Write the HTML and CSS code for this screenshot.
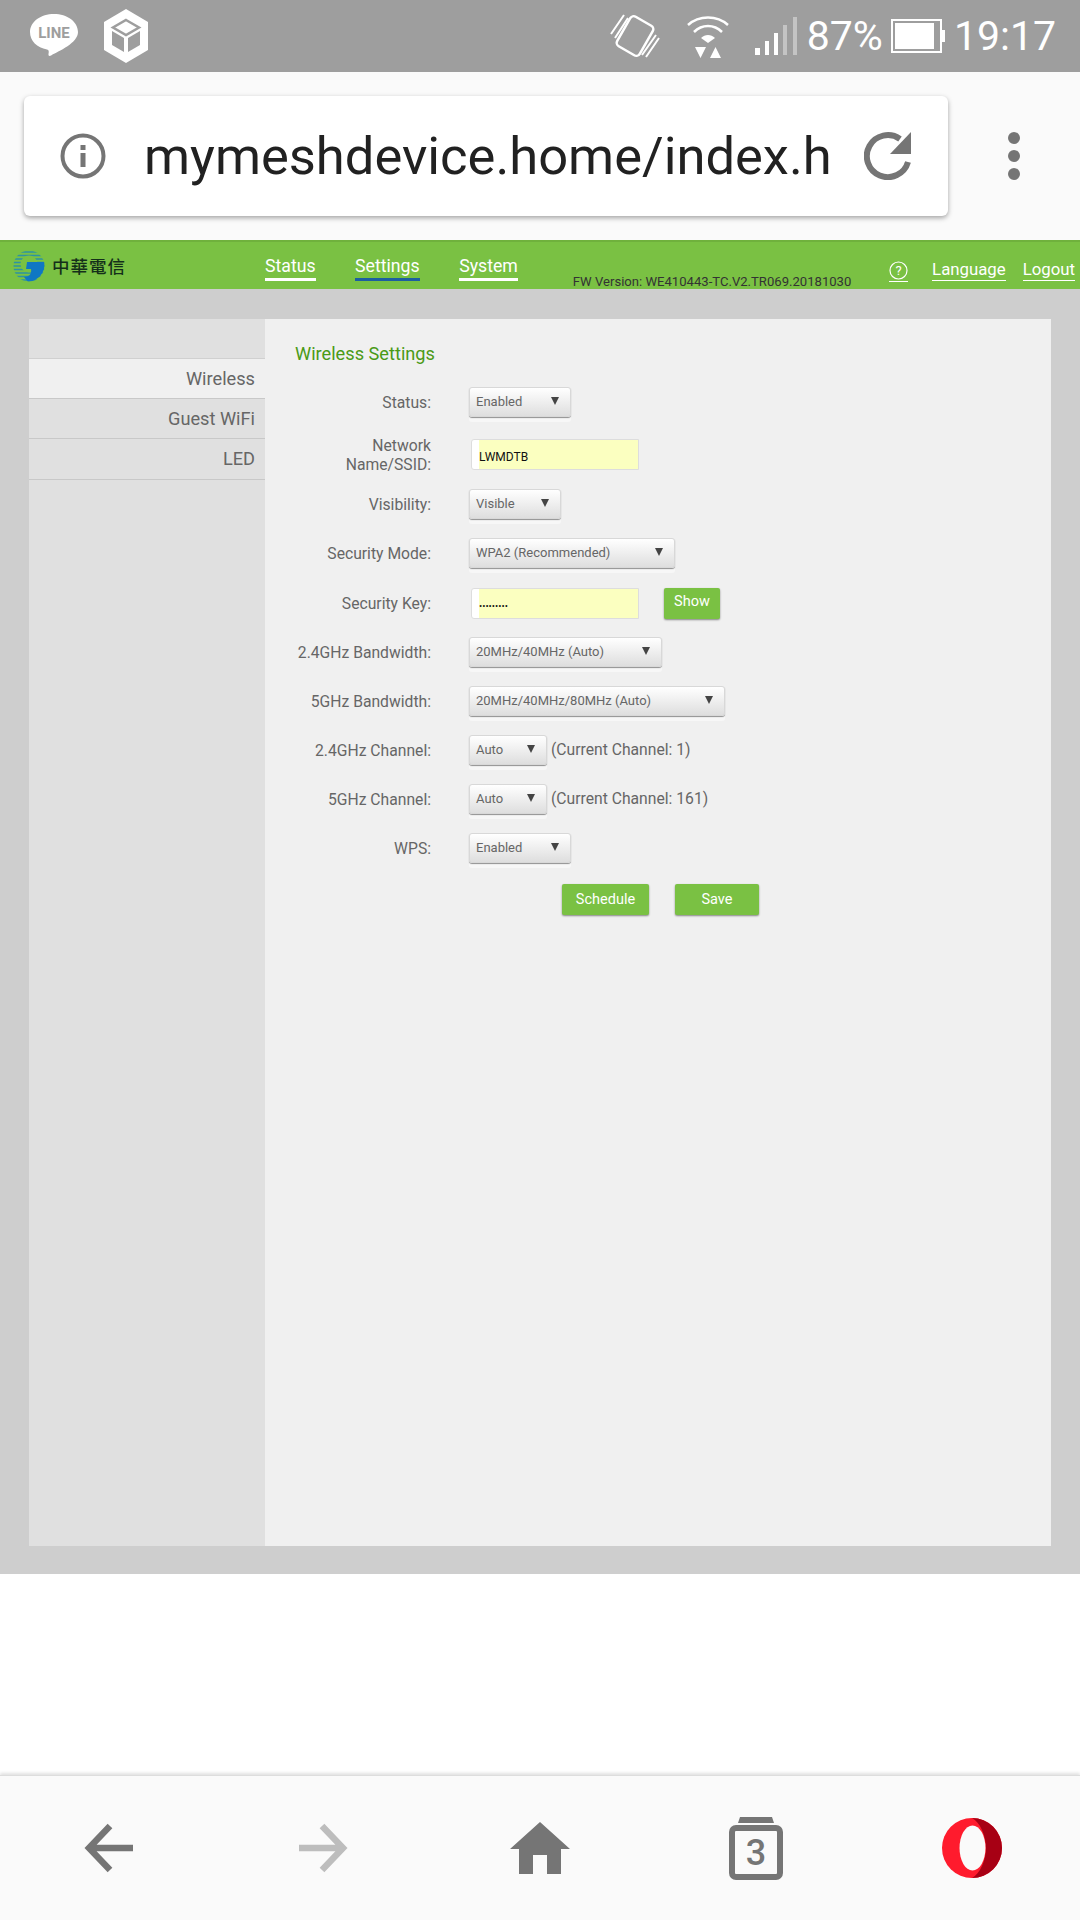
FILE: index.html
```html
<!DOCTYPE html>
<html lang="en">
<head>
  <meta charset="UTF-8" />
  <title>Wireless Settings</title>
  <link rel="stylesheet" href="styles.css">
</head>
<body>
  <div class="phone">
    <div class="statusbar">
      <div class="status-left">
        <svg class="icon-line" width="48" height="48" viewBox="0 0 48 48">
          <path d="M24 2C11 2 0 9.500 0 20c0 9 7 15.500 17 17.500 2 .5 2 2 1.500 4.500-.3 2 1 2.500 3 1.200C29 39 48 31 48 20 48 9.500 37 2 24 2z" fill="#fff"/>
          <text x="24" y="26" text-anchor="middle" class="line-text">LINE</text>
        </svg>
        <svg class="icon-box" width="44" height="54" viewBox="0 0 44 54">
          <path d="M22 0l22 13v28L22 54 0 41V13z" fill="#fff"/>
          <path d="M22 11l13 7.500-13 7.500-13-7.500z" fill="none" stroke="#9e9e9e" stroke-width="2.500"/>
          <path d="M8 22l12 7v14l-12-7z" fill="#9e9e9e"/>
          <path d="M36 22l-12 7v14l12-7z" fill="#9e9e9e"/>
        </svg>
      </div>
      <div class="status-right">
        <svg class="icon-vibrate" width="50" height="46" viewBox="0 0 50 46">
          <rect x="12" y="6" width="26" height="34" rx="4" transform="rotate(30 25 23)" fill="none" stroke="#fff" stroke-width="2.500"/>
          <path d="M1 21L14 2M5 25L18 5M32 42L46 22M36 44L49 25" stroke="#fff" stroke-width="2" fill="none"/>
        </svg>
        <svg class="icon-wifi" width="42" height="44" viewBox="0 0 42 44">
          <path d="M1 11C12 1 30 1 41 11" fill="none" stroke="#fff" stroke-width="2.500"/>
          <path d="M7 18C15 10 27 10 35 18" fill="none" stroke="#fff" stroke-width="2.500"/>
          <path d="M14 24C18 20 24 20 28 24L21 29z" fill="#fff"/>
          <path d="M8 33h11l-5.500 11zM23 44h11l-5.500-11z" fill="#fff"/>
        </svg>
        <svg class="icon-signal" width="42" height="38" viewBox="0 0 42 38">
          <rect x="0" y="31" width="5" height="7" fill="#fff"/>
          <rect x="10" y="24" width="4" height="14" fill="#fff"/>
          <rect x="19" y="16" width="4" height="22" fill="#fff"/>
          <rect x="28" y="8" width="4" height="30" fill="#c4c4c4"/>
          <rect x="38" y="0" width="4" height="38" fill="#c4c4c4"/>
        </svg>
        <span class="status-text battery-text">87%</span>
        <svg class="icon-battery" width="54" height="34" viewBox="0 0 54 34">
          <rect x="1" y="1" width="49" height="32" fill="none" stroke="#fff" stroke-width="2"/>
          <rect x="4" y="4" width="39" height="26" fill="#fff"/>
          <rect x="50" y="11" width="4" height="12" fill="#fff"/>
        </svg>
        <span class="status-text clock">19:17</span>
      </div>
    </div>

    <div class="toolbar">
      <div class="urlbox">
        <svg class="icon-info" width="46" height="46" viewBox="0 0 46 46">
          <circle cx="23" cy="23" r="20.500" fill="none" stroke="#757575" stroke-width="4"/>
          <rect x="20.500" y="12" width="5" height="5" fill="#757575"/>
          <rect x="20.500" y="20" width="5" height="14" fill="#757575"/>
        </svg>
        <div class="url">mymeshdevice.home/index.h</div>
        <svg class="icon-reload" width="48" height="48" viewBox="0 0 48 48">
          <path d="M44 30A21 21 0 1 1 36 7" fill="none" stroke="#757575" stroke-width="6"/>
          <path d="M47 0v22H26z" fill="#757575"/>
        </svg>
      </div>
      <div class="menu-dots"><i></i><i></i><i></i></div>
    </div>

    <div class="header">
      <svg class="logo" width="32" height="32" viewBox="0 0 32 32">
        <defs><clipPath id="logoClip"><circle cx="16" cy="16" r="15.500"/></clipPath></defs>
        <g clip-path="url(#logoClip)">
          <path d="M0 2h32M0 5.500h32M0 9h32M0 12.500h32M0 16h32M0 19.500h32M0 23h32M0 26.500h32M0 30h32" stroke="#2d93a3" stroke-width="1.700"/>
          <circle cx="16" cy="14" r="8.500" fill="#7ac143"/>
          <path d="M14 12H32C32 22 26 31 15 32L11 27C16 27 19 24 18 19H13z" fill="#0f77c4"/>
        </g>
      </svg>
      <span class="logo-text">中華電信</span>
      <nav class="mainnav">
        <a class="navlink">Status</a>
        <a class="navlink active">Settings</a>
        <a class="navlink">System</a>
      </nav>
      <span class="fw">FW Version: WE410443-TC.V2.TR069.20181030</span>
      <div class="header-right">
        <a class="toplink">
          <svg class="icon-help" width="19" height="19" viewBox="0 0 19 19">
            <circle cx="9.500" cy="9.500" r="8.500" fill="none" stroke="#fff" stroke-width="1.200"/>
            <text x="9.500" y="14" text-anchor="middle" class="help-text">?</text>
          </svg>
        </a>
        <a class="toplink">Language</a>
        <a class="toplink">Logout</a>
      </div>
    </div>

    <div class="page">
      <div class="panel">
        <div class="sidebar">
          <div class="side-item active">Wireless</div>
          <div class="side-item">Guest WiFi</div>
          <div class="side-item">LED</div>
        </div>
        <div class="main">
          <div class="title">Wireless Settings</div>

          <div class="row row-52">
            <label>Status:</label>
            <div class="select w-102">Enabled</div>
          </div>
          <div class="row row-50">
            <label class="label-double">Network Name/SSID:</label>
            <div class="textbox"><span>LWMDTB</span></div>
          </div>
          <div class="row">
            <label>Visibility:</label>
            <div class="select w-92">Visible</div>
          </div>
          <div class="row row-50">
            <label>Security Mode:</label>
            <div class="select w-206">WPA2 (Recommended)</div>
          </div>
          <div class="row">
            <label>Security Key:</label>
            <div class="control-line">
              <div class="textbox"><span class="dots">•••••••••</span></div>
              <button class="btn btn-show">Show</button>
            </div>
          </div>
          <div class="row">
            <label>2.4GHz Bandwidth:</label>
            <div class="select w-193">20MHz/40MHz (Auto)</div>
          </div>
          <div class="row">
            <label>5GHz Bandwidth:</label>
            <div class="select w-256">20MHz/40MHz/80MHz (Auto)</div>
          </div>
          <div class="row">
            <label>2.4GHz Channel:</label>
            <div class="control-line tight">
              <div class="select w-78">Auto</div>
              <span class="hint">(Current Channel: 1)</span>
            </div>
          </div>
          <div class="row">
            <label>5GHz Channel:</label>
            <div class="control-line tight">
              <div class="select w-78">Auto</div>
              <span class="hint">(Current Channel: 161)</span>
            </div>
          </div>
          <div class="row row-51">
            <label>WPS:</label>
            <div class="select w-102">Enabled</div>
          </div>
          <div class="actions">
            <button class="btn btn-schedule">Schedule</button>
            <button class="btn btn-save">Save</button>
          </div>
        </div>
      </div>
    </div>

    <div class="blank"></div>

    <div class="bottombar">
      <div class="bottom-item">
        <svg width="50" height="50" viewBox="0 0 50 50">
          <path d="M27 3L6 25l21 22M7 25h43" fill="none" stroke="#757575" stroke-width="6.500"/>
        </svg>
      </div>
      <div class="bottom-item">
        <svg width="50" height="50" viewBox="0 0 50 50">
          <path d="M23 3l21 22-21 22M43 25H0" fill="none" stroke="#bdbdbd" stroke-width="6.500"/>
        </svg>
      </div>
      <div class="bottom-item">
        <svg width="60" height="52" viewBox="0 0 60 52">
          <path d="M30 0l30 27H51v25H37V33H23v19H9V27H0z" fill="#757575"/>
        </svg>
      </div>
      <div class="bottom-item">
        <svg width="54" height="63" viewBox="0 0 54 63">
          <path d="M9 6l2-6h32l2 6z" fill="#757575"/>
          <rect x="3" y="11" width="48" height="49" rx="4" fill="none" stroke="#757575" stroke-width="6"/>
          <text x="27" y="48" text-anchor="middle" class="tab-count">3</text>
        </svg>
      </div>
      <div class="bottom-item">
        <svg width="60" height="60" viewBox="0 0 60 60">
          <ellipse cx="30" cy="30" rx="30" ry="30" fill="#ff1b2d"/>
          <path d="M30 0a30 30 0 0 1 0 60C38 56 44 42 44 30S38 4 30 0z" fill="#a70014"/>
          <ellipse cx="30.500" cy="30" rx="13" ry="22.500" fill="#fafafa"/>
        </svg>
      </div>
    </div>
  </div>
</body>
</html>
```

FILE: styles.css
```css
* {
  box-sizing: border-box;
}
body {
  margin: 0;
  font-family: Roboto, sans-serif;
  background: #fff;
}
.phone {
  width: 1080px;
  height: 1920px;
  display: flex;
  flex-direction: column;
  overflow: hidden;
}

/* status bar */
.statusbar {
  height: 72px;
  background: #9e9e9e;
  display: flex;
  justify-content: space-between;
  align-items: center;
  padding: 0 24px 0 30px;
  color: #fff;
}
.status-left {
  display: flex;
  align-items: center;
  gap: 26px;
}
.status-right {
  display: flex;
  align-items: center;
}
.line-text {
  font: bold 15px Roboto, sans-serif;
  fill: #9e9e9e;
}
.status-text {
  font-size: 41px;
  line-height: 72px;
}
.icon-vibrate {
  margin-right: 27px;
}
.icon-wifi {
  margin-right: 26px;
}
.icon-signal {
  margin-right: 10px;
}
.battery-text {
  margin-right: 8px;
}
.icon-battery {
  margin-right: 9px;
}

/* browser toolbar */
.toolbar {
  height: 168px;
  background: #fafafa;
  display: flex;
  align-items: center;
  padding: 0 0 0 24px;
}
.urlbox {
  width: 924px;
  height: 120px;
  background: #fff;
  border-radius: 6px;
  box-shadow: 0 2px 5px rgba(0,0,0,0.35);
  display: flex;
  align-items: center;
  padding: 0 36px 0 36px;
}
.url {
  flex: 1;
  margin-left: 38px;
  font-size: 52.500px;
  color: #212121;
  white-space: nowrap;
  overflow: hidden;
}
.menu-dots {
  margin-left: 60px;
  display: flex;
  flex-direction: column;
  gap: 6px;
}
.menu-dots i {
  display: block;
  width: 12px;
  height: 12px;
  border-radius: 50%;
  background: #757575;
}

/* router header */
.header {
  height: 49px;
  background: #7ac143;
  border-top: 2px solid #6fb13c;
  display: flex;
  align-items: center;
  padding-left: 13px;
}
.logo-text {
  margin-left: 7px;
  font-family: "Noto Sans CJK TC", sans-serif;
  font-size: 17.500px;
  font-weight: 500;
  color: #142f1a;
  letter-spacing: 1px;
}
.mainnav {
  display: flex;
  gap: 39.500px;
  margin-left: 139px;
}
.navlink {
  font-size: 17.700px;
  color: #fff;
  line-height: 24px;
  border-bottom: 3px solid #fff;
  margin-top: 3px;
}
.navlink.active {
  border-bottom-color: #1d5fa0;
}
.fw {
  margin-left: 55px;
  margin-top: 31px;
  font-size: 13.100px;
  color: #333;
  white-space: nowrap;
}
.header-right {
  margin-left: auto;
  display: flex;
  align-items: center;
  gap: 17px;
  padding-right: 5px;
  margin-top: 9px;
}
.toplink {
  font-size: 16.800px;
  color: #fff;
  line-height: 21px;
  border-bottom: 1px solid #fff;
  display: block;
}
.toplink:first-child {
  margin-right: 7px;
}
.icon-help {
  display: block;
  margin: 2px 0 1px;
}
.help-text {
  font: 13px Roboto, sans-serif;
  fill: #fff;
}

/* router page */
.page {
  height: 1285px;
  background: #cecece;
  padding: 30px 29px 28px;
}
.panel {
  height: 100%;
  display: flex;
  background: #f0f0f0;
}
.sidebar {
  width: 236px;
  background: #e0e0e0;
  padding-top: 39px;
}
.side-item {
  height: 40.500px;
  line-height: 40px;
  padding-right: 10px;
  text-align: right;
  font-size: 18.200px;
  color: #666;
  border-bottom: 1px solid #c8c8c8;
}
.side-item.active {
  background: #f0f0f0;
  border-top: 1px solid #d0d0d0;
}
.main {
  flex: 1;
  padding: 23px 0 0 30px;
}
.title {
  font-size: 18.200px;
  line-height: 24px;
  color: #4a9a16;
  margin-bottom: 21px;
}
.row {
  display: grid;
  grid-template-columns: 136px 1fr;
  column-gap: 38px;
  height: 49px;
  align-items: start;
}
.row-52 {
  height: 52px;
}
.row-50 {
  height: 50px;
}
.row-51 {
  height: 51px;
}
.row label {
  text-align: right;
  font-size: 15.700px;
  line-height: 32px;
  color: #666;
  white-space: nowrap;
}
.row label.label-double {
  white-space: normal;
  line-height: 19px;
  margin-top: -3px;
  margin-left: 30px;
}
.select {
  height: 30px;
  line-height: 28px;
  padding-left: 6px;
  font-size: 13px;
  color: #666;
  background: linear-gradient(#fff, #dedede);
  border: 1px solid #d8d8d8;
  border-radius: 3px;
  box-shadow: 0 1px 1px #8f8f8f, 0 5px 0 #f7f7f7;
  position: relative;
}
.select::after {
  content: "";
  position: absolute;
  right: 11px;
  top: 9px;
  border-left: 4.500px solid transparent;
  border-right: 4.500px solid transparent;
  border-top: 8px solid #444;
}
.w-78 { width: 78px; }
.w-92 { width: 92px; }
.w-102 { width: 102px; }
.w-193 { width: 193px; }
.w-206 { width: 206px; }
.w-256 { width: 256px; }
.textbox {
  width: 168px;
  height: 31px;
  margin-left: 2px;
  padding-left: 8px;
  background: #fff;
  border: 1px solid #ddd;
  border-radius: 3px 0 0 3px;
}
.textbox span {
  display: block;
  height: 100%;
  margin-left: -1px;
  background: #fbffc0;
  font-size: 12px;
  line-height: 34px;
  color: #111;
}
.textbox span.dots {
  font-size: 9.500px;
  line-height: 33px;
}
.control-line {
  display: flex;
  align-items: flex-start;
  gap: 25px;
}
.control-line.tight {
  gap: 4px;
}
.hint {
  font-size: 15.700px;
  line-height: 30px;
  color: #666;
  white-space: nowrap;
}
.btn {
  border: none;
  border-radius: 2px;
  background: #7ac143;
  color: #fff;
  font-family: Roboto, sans-serif;
  font-size: 14.500px;
  padding: 0 0 1px;
  height: 31px;
  box-shadow: 0 1px 2px rgba(0,0,0,0.45);
}
.btn-show {
  width: 56px;
  padding-bottom: 4px;
}
.actions {
  display: flex;
  gap: 26px;
  padding-left: 267px;
}
.btn-schedule {
  width: 87px;
}
.btn-save {
  width: 84px;
}

/* blank area + bottom bar */
.blank {
  flex: 1;
  background: #fff;
}
.bottombar {
  height: 145px;
  background: #fafafa;
  border-top: 1px solid #ddd;
  box-shadow: 0 -2px 3px rgba(0,0,0,0.12);
  display: flex;
}
.bottom-item {
  flex: 1;
  display: flex;
  align-items: center;
  justify-content: center;
}
.tab-count {
  font: 500 36px Roboto, sans-serif;
  fill: #757575;
}
```
